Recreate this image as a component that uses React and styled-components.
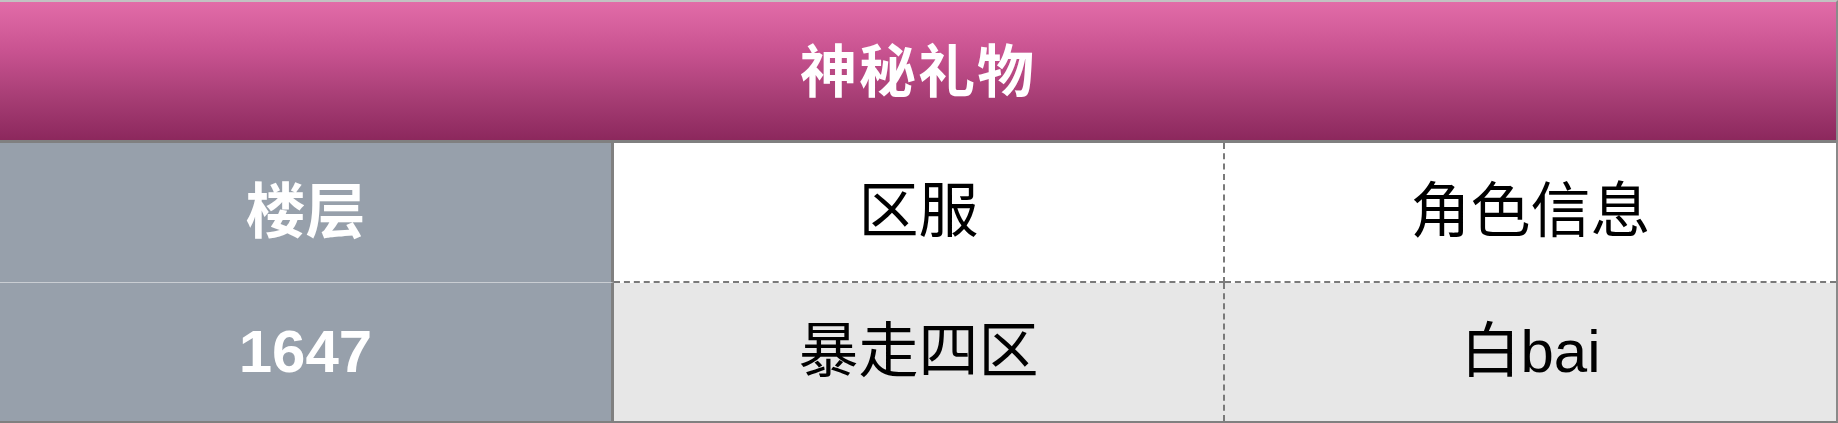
import React from "react";
import styled, { createGlobalStyle } from "styled-components";

const Global = createGlobalStyle`
  html, body { margin: 0; padding: 0; background: #ffffff; }
  body { font-family: "Liberation Sans", "Noto Sans CJK SC", sans-serif; }
`;

const Frame = styled.div`
  width: 1838px;
  box-sizing: border-box;
  border-top: 2px solid #c2c2c2;
  border-right: 2px solid #8a8a8a;
  border-bottom: 2px solid #808080;
  overflow: hidden;
`;

const Header = styled.div`
  height: 141px;
  box-sizing: border-box;
  padding-bottom: 9px;
  border-bottom: 3px solid #808080;
  background: linear-gradient(180deg, #e26ca8 0%, #c95391 35%, #a63d74 70%, #8c285d 100%);
  display: flex;
  align-items: center;
  justify-content: center;
  color: #ffffff;
  font-size: 57px;
  font-weight: 700;
  letter-spacing: 2px;
`;

const Grid = styled.div`
  display: grid;
  grid-template-columns: 614px 611px 1fr;
  grid-template-rows: 140px 138px;
`;

const Cell = styled.div`
  box-sizing: border-box;
  display: flex;
  align-items: center;
  justify-content: center;
  font-size: 60px;
  line-height: 1;
  color: ${(p) => (p.$label ? "#ffffff" : "#000000")};
  font-weight: ${(p) => (p.$label ? 700 : 400)};
  background: ${(p) => (p.$label ? "#97a0ab" : p.$alt ? "#e7e7e7" : "#ffffff")};
  border-right: ${(p) =>
    p.$label ? "3px solid #808080" : p.$mid ? "2px dashed #7a7a7a" : "none"};
  border-bottom: ${(p) =>
    p.$top ? (p.$label ? "1px solid #c9cdd2" : "2px dashed #7a7a7a") : "none"};
  ${(p) => (p.$top && p.$label ? "padding-top: 1px;" : "")}
`;

export default function App() {
  return (
    <>
      <Global />
      <Frame>
        <Header>神秘礼物</Header>
        <Grid>
          <Cell $label $top>楼层</Cell>
          <Cell $mid $top>区服</Cell>
          <Cell $top>角色信息</Cell>
          <Cell $label>1647</Cell>
          <Cell $mid $alt>暴走四区</Cell>
          <Cell $alt>白bai</Cell>
        </Grid>
      </Frame>
    </>
  );
}
